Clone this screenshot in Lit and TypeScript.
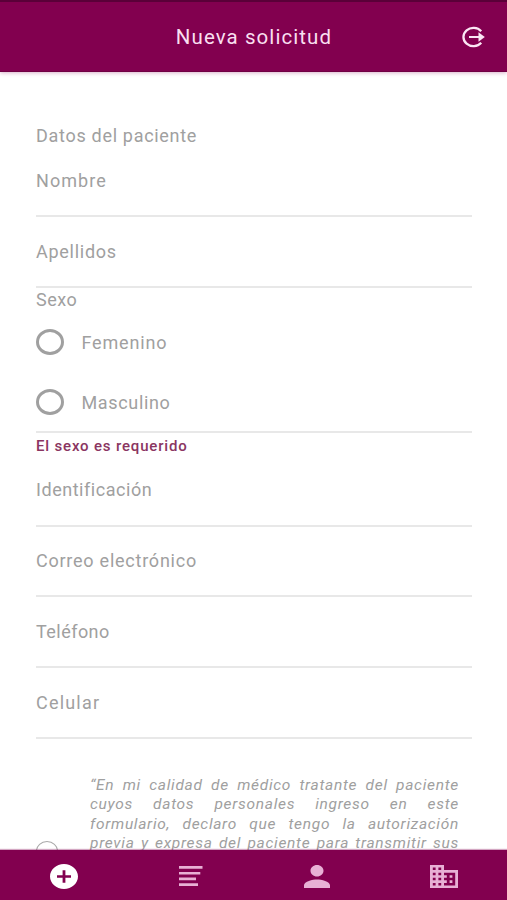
import { LitElement, html, css, svg, nothing } from "lit";
import { customElement, property } from "lit/decorators.js";
import { styleMap } from "lit/directives/style-map.js";

const tracking = (px: number) => styleMap({ letterSpacing: `${px}px` });

@customElement("form-field")
class FormField extends LitElement {
  @property() label = "";
  @property({ type: Number }) spacing = 0.9;
  static styles = css`
    :host {
      display: block;
      box-sizing: border-box;
      height: 70.8px;
      padding-top: 22.5px;
      border-bottom: 2px solid #e8e8e8;
      line-height: 24px;
    }
  `;
  render() {
    return html`<span style=${tracking(this.spacing)}>${this.label}</span>`;
  }
}

@customElement("radio-option")
class RadioOption extends LitElement {
  @property() label = "";
  @property({ type: Number }) spacing = 0.9;
  static styles = css`
    :host {
      display: flex;
      align-items: center;
      gap: 17.5px;
      height: 26px;
    }
    .ring {
      box-sizing: border-box;
      width: 28px;
      height: 26px;
      border: 3px solid #a0a0a0;
      border-radius: 50%;
    }
    .text {
      line-height: 24px;
      padding-top: 2px;
    }
  `;
  render() {
    return html`<span class="ring"></span
      ><span class="text" style=${tracking(this.spacing)}>${this.label}</span>`;
  }
}

const tabs = [
  {
    box: "2 2 20 20", w: 28, h: 25, active: true,
    shape: svg`<path d="M12 2C6.48 2 2 6.48 2 12s4.48 10 10 10 10-4.48 10-10S17.52 2 12 2zm5 11h-4v4h-2v-4H7v-2h4V7h2v4h4v2z"/>`,
  },
  {
    box: "0 0 24 20", w: 24, h: 20, active: false,
    shape: svg`<path d="M0 0h23.5v2.8H0zM0 6h21.3v2.6H0zM0 11.6h17v2.7H0zM0 17.2h19V20H0z"/>`,
  },
  {
    box: "4 4 16 16", w: 26, h: 23, active: false,
    shape: svg`<path d="M12 12c2.21 0 4-1.79 4-4s-1.79-4-4-4-4 1.79-4 4 1.79 4 4 4zm0 2c-2.67 0-8 1.34-8 4v2h16v-2c0-2.66-5.33-4-8-4z"/>`,
  },
  {
    box: "2 3 20 18", w: 28, h: 23, active: false,
    shape: svg`<path d="M12 7V3H2v18h20V7H12zM6 19H4v-2h2v2zm0-4H4v-2h2v2zm0-4H4V9h2v2zm0-4H4V5h2v2zm4 12H8v-2h2v2zm0-4H8v-2h2v2zm0-4H8V9h2v2zm0-4H8V5h2v2zm10 12h-8v-2h2v-2h-2v-2h2v-2h-2V9h8v10zm-2-8h-2v2h2v-2zm0 4h-2v2h2v-2z"/>`,
  },
];

const contactFields: [string, number][] = [
  ["Identificación", 0.54],
  ["Correo electrónico", 0.76],
  ["Teléfono", 0.46],
  ["Celular", 1.2],
];

const consent = [
  "“En mi calidad de médico tratante del paciente",
  "cuyos datos personales ingreso en este",
  "formulario, declaro que tengo la autorización",
  "previa y expresa del paciente para transmitir sus",
];

@customElement("app-root")
class AppRoot extends LitElement {
  static styles = css`
    :host {
      display: flex;
      flex-direction: column;
      height: 900px;
      overflow: hidden;
      background: #fff;
      color: #a0a0a0;
      font-family: Roboto, "Liberation Sans", sans-serif;
      font-size: 18px;
      letter-spacing: 0.9px;
    }
    .header {
      box-sizing: border-box;
      flex: none;
      height: 72px;
      display: grid;
      grid-template-columns: 1fr auto 1fr;
      align-items: center;
      padding: 0 22px 0 23px;
      background: #82004f;
      border-top: 2px solid #5a0038;
      border-bottom: 1px solid #700044;
      box-shadow: 0 1px 4px rgba(130, 0, 79, 0.3);
      color: #f9dff0;
    }
    .title {
      grid-column: 2;
      font-size: 20.5px;
      letter-spacing: 1.07px;
      line-height: 26px;
    }
    .logout {
      justify-self: end;
      width: 24px;
      height: 22px;
    }
    .content {
      flex: 1;
      min-height: 0;
      overflow: hidden;
      padding: 52px 35px 0 36px;
    }
    .heading {
      height: 22.4px;
      line-height: 23px;
      letter-spacing: 0.7px;
    }
    .sexo {
      box-sizing: border-box;
      height: 145.3px;
      border-bottom: 2px solid #e8e8e8;
    }
    .caption {
      line-height: 24px;
      height: 41px;
      letter-spacing: 0.5px;
    }
    .options {
      display: flex;
      flex-direction: column;
      gap: 34.5px;
    }
    .error {
      height: 22.6px;
      line-height: 27px;
      font-size: 15px;
      font-weight: 500;
      letter-spacing: 0.83px;
      color: #8a3561;
    }
    .consent {
      display: flex;
      padding: 37px 13px 0 0;
    }
    .check {
      box-sizing: border-box;
      flex: none;
      width: 22px;
      height: 20px;
      margin: 65px 32px 0 0;
      border: 1px solid #aaa;
      border-radius: 50%;
    }
    .statement {
      flex: 1;
      font-size: 15.5px;
      font-style: italic;
      letter-spacing: 0.7px;
      line-height: 19.4px;
    }
    .line {
      display: block;
      white-space: nowrap;
      text-align-last: justify;
    }
    .tabs {
      flex: none;
      height: 50px;
      display: grid;
      grid-template-columns: repeat(4, 1fr);
      place-items: center;
      background: #82004f;
      padding: 2px 0 0 1px;
      box-sizing: border-box;
      box-shadow: 0 -1px 1px rgba(130, 0, 79, 0.35);
      fill: #e8b0d5;
    }
    .active {
      fill: #fff;
    }
  `;

  render() {
    return html`
      <div class="header">
        <span class="title">Nueva solicitud</span>
        <svg class="logout" viewBox="0 0 24 22" fill="none" stroke="#fbe6f4" stroke-width="2.3">
          <path d="M20.2 5.2A10 9.2 0 1 0 20.2 16.8" />
          <path d="M8 11H20" stroke-width="2" />
          <path d="M17.5 6.3L23.8 11L17.5 15.7Z" fill="#fbe6f4" stroke="none" />
        </svg>
      </div>
      <div class="content">
        <div class="heading">Datos del paciente</div>
        <form-field label="Nombre" spacing="1.05"></form-field>
        <form-field label="Apellidos" spacing="0.73"></form-field>
        <div class="sexo">
          <div class="caption">Sexo</div>
          <div class="options">
            <radio-option label="Femenino" spacing="0.82"></radio-option>
            <radio-option label="Masculino" spacing="0.65"></radio-option>
          </div>
        </div>
        <div class="error">El sexo es requerido</div>
        ${contactFields.map(
          ([label, spacing]) =>
            html`<form-field label=${label} spacing=${spacing}></form-field>`
        )}
        <div class="consent">
          <span class="check"></span>
          <div class="statement">
            ${consent.map((line) => html`<span class="line">${line}</span>`)}
          </div>
        </div>
      </div>
      <div class="tabs">
        ${tabs.map(
          (t) => html`<svg class=${t.active ? "active" : nothing} width=${t.w} height=${t.h}
            viewBox=${t.box} preserveAspectRatio="none">${t.shape}</svg>`
        )}
      </div>
    `;
  }
}
